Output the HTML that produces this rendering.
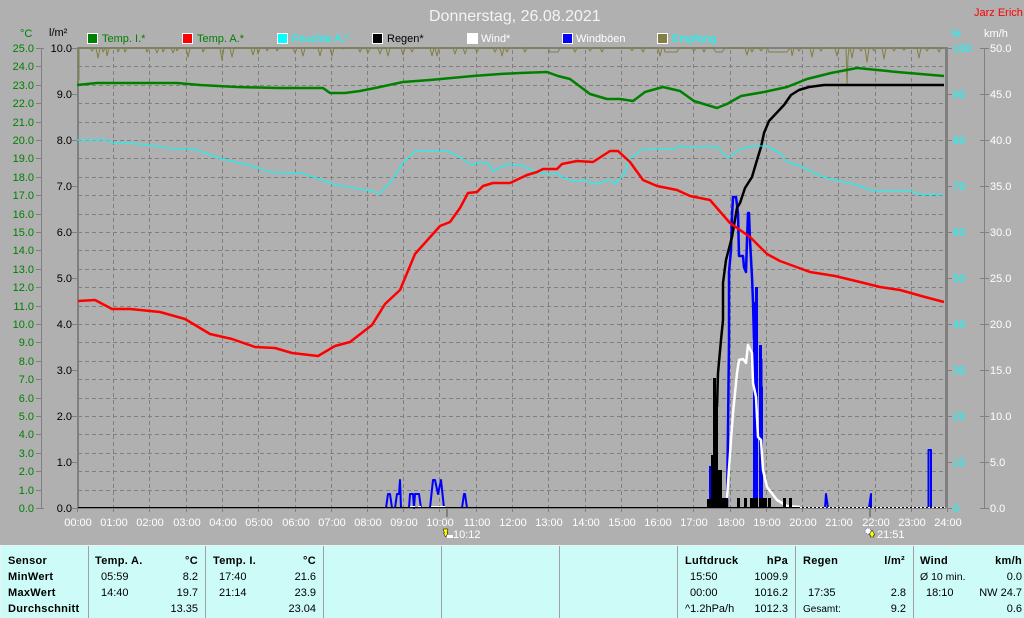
<!DOCTYPE html>
<html><head><meta charset="utf-8"><title>Donnerstag, 26.08.2021</title>
<style>
html,body{margin:0;padding:0;background:#b0b0b0;width:1024px;height:618px;overflow:hidden}
svg{display:block;font-family:"Liberation Sans",sans-serif;font-size:11px}
.l{stroke-linejoin:round;fill:none}
.b{font-weight:bold;fill:#000;letter-spacing:.3px}
.e{text-anchor:end}
.m{text-anchor:middle}
</style></head><body>
<svg width="1024" height="618" viewBox="0 0 1024 618" xmlns="http://www.w3.org/2000/svg">
<rect width="1024" height="618" fill="#b0b0b0"/>

<text x="429" y="21" font-size="16" fill="#f4f4f4">Donnerstag, 26.08.2021</text>
<text x="974" y="16" fill="#f00">Jarz Erich</text>

<g shape-rendering="crispEdges" stroke="#fff">
<rect x="87.5" y="33.5" width="10" height="10" fill="#008000"/>
<rect x="182.5" y="33.5" width="10" height="10" fill="#f00"/>
<rect x="277.5" y="33.5" width="10" height="10" fill="#0ff"/>
<rect x="372.5" y="33.5" width="10" height="10" fill="#000"/>
<rect x="467.5" y="33.5" width="10" height="10" fill="#fff"/>
<rect x="562.5" y="33.5" width="10" height="10" fill="#00f"/>
<rect x="657.5" y="33.5" width="10" height="10" fill="#808040"/>
</g>
<text x="102" y="42" fill="#008000">Temp. I.*</text>
<text x="197" y="42" fill="#008000">Temp. A.*</text>
<text x="292" y="42" fill="#0ff">Feuchte A.*</text>
<text x="387" y="42" fill="#000">Regen*</text>
<text x="481" y="42" fill="#fff">Wind*</text>
<text x="576" y="42" fill="#fff">Windböen</text>
<text x="672" y="42" fill="#0ff">Empfang</text>

<text x="20" y="37" fill="#008000">°C</text>
<text x="49" y="36" fill="#000">l/m²</text>
<text x="951" y="37" fill="#0ff">%</text>
<text x="984" y="37" fill="#fff">km/h</text>

<!-- grid -->
<path shape-rendering="crispEdges" fill="none" stroke="#808080" stroke-dasharray="4 3" d="M78 66.5H945M78 85.5H945M78 103.5H945M78 122.5H945M78 140.5H945M78 158.5H945M78 177.5H945M78 195.5H945M78 214.5H945M78 232.5H945M78 250.5H945M78 269.5H945M78 287.5H945M78 306.5H945M78 324.5H945M78 342.5H945M78 361.5H945M78 379.5H945M78 398.5H945M78 416.5H945M78 434.5H945M78 453.5H945M78 471.5H945M78 490.5H945"/>
<path shape-rendering="crispEdges" fill="none" stroke="#808080" stroke-dasharray="4 3" d="M113.5 50V508M149.5 50V508M186.5 50V508M222.5 50V508M258.5 50V508M295.5 50V508M331.5 50V508M367.5 50V508M403.5 50V508M439.5 50V508M476.5 50V508M512.5 50V508M548.5 50V508M585.5 50V508M621.5 50V508M657.5 50V508M693.5 50V508M730.5 50V508M766.5 50V508M802.5 50V508M838.5 50V508M875.5 50V508M911.5 50V508"/>

<!-- axes -->
<g shape-rendering="crispEdges" fill="#808080">
<rect x="77" y="47" width="869" height="2"/>
<rect x="77" y="47" width="2" height="461"/>
<rect x="945" y="47" width="3" height="461"/>
<rect x="78" y="508" width="868" height="1"/>
<rect x="41" y="48" width="1" height="460"/>
<rect x="984" y="48" width="1" height="460"/>
</g>
<path shape-rendering="crispEdges" fill="none" stroke="#808080" d="M36 48.5H44M36 66.5H41M36 85.5H41M36 103.5H41M36 122.5H41M36 140.5H41M36 158.5H41M36 177.5H41M36 195.5H41M36 214.5H41M36 232.5H41M36 250.5H41M36 269.5H41M36 287.5H41M36 306.5H41M36 324.5H41M36 342.5H41M36 361.5H41M36 379.5H41M36 398.5H41M36 416.5H41M36 434.5H41M36 453.5H41M36 471.5H41M36 490.5H41M36 508.5H44
M72 48.5H77M72 94.5H77M72 140.5H77M72 186.5H77M72 232.5H77M72 278.5H77M72 324.5H77M72 370.5H77M72 416.5H77M72 462.5H77M72 508.5H77
M948 48.5H952M948 94.5H952M948 140.5H952M948 186.5H952M948 232.5H952M948 278.5H952M948 324.5H952M948 370.5H952M948 416.5H952M948 462.5H952M948 508.5H952
M980 48.5H989M980 94.5H989M980 140.5H989M980 186.5H989M980 232.5H989M980 278.5H989M980 324.5H989M980 370.5H989M980 416.5H989M980 462.5H989M980 508.5H989
M77.5 508V512M113.5 508V512M149.5 508V512M186.5 508V512M222.5 508V512M258.5 508V512M295.5 508V512M331.5 508V512M367.5 508V512M403.5 508V512M439.5 508V512M476.5 508V512M512.5 508V512M548.5 508V512M585.5 508V512M621.5 508V512M657.5 508V512M693.5 508V512M730.5 508V512M766.5 508V512M802.5 508V512M838.5 508V512M875.5 508V512M911.5 508V512M947.5 508V512"/>
<rect x="446" y="509" width="2" height="8" fill="#808080"/>
<rect x="869" y="509" width="2" height="8" fill="#808080"/>

<!-- left axis C -->
<g class="e" fill="#008000">
<text x="34" y="52">25.0</text><text x="34" y="70">24.0</text><text x="34" y="89">23.0</text><text x="34" y="107">22.0</text><text x="34" y="126">21.0</text><text x="34" y="144">20.0</text><text x="34" y="162">19.0</text><text x="34" y="181">18.0</text><text x="34" y="199">17.0</text><text x="34" y="218">16.0</text><text x="34" y="236">15.0</text><text x="34" y="254">14.0</text><text x="34" y="273">13.0</text><text x="34" y="291">12.0</text><text x="34" y="310">11.0</text><text x="34" y="328">10.0</text><text x="34" y="346">9.0</text><text x="34" y="365">8.0</text><text x="34" y="383">7.0</text><text x="34" y="402">6.0</text><text x="34" y="420">5.0</text><text x="34" y="438">4.0</text><text x="34" y="457">3.0</text><text x="34" y="475">2.0</text><text x="34" y="494">1.0</text><text x="34" y="512">0.0</text>
</g>
<g class="e" fill="#000">
<text x="72" y="52">10.0</text><text x="72" y="98">9.0</text><text x="72" y="144">8.0</text><text x="72" y="190">7.0</text><text x="72" y="236">6.0</text><text x="72" y="282">5.0</text><text x="72" y="328">4.0</text><text x="72" y="374">3.0</text><text x="72" y="420">2.0</text><text x="72" y="466">1.0</text><text x="72" y="512">0.0</text>
</g>
<g fill="#0ff">
<text x="953" y="52">100</text><text x="953" y="98">90</text><text x="953" y="144">80</text><text x="953" y="190">70</text><text x="953" y="236">60</text><text x="953" y="282">50</text><text x="953" y="328">40</text><text x="953" y="374">30</text><text x="953" y="420">20</text><text x="953" y="466">10</text><text x="953" y="512">0</text>
</g>
<g fill="#fff">
<text x="990" y="52">50.0</text><text x="990" y="98">45.0</text><text x="990" y="144">40.0</text><text x="990" y="190">35.0</text><text x="990" y="236">30.0</text><text x="990" y="282">25.0</text><text x="990" y="328">20.0</text><text x="990" y="374">15.0</text><text x="990" y="420">10.0</text><text x="990" y="466">5.0</text><text x="990" y="512">0.0</text>
</g>
<g class="m" fill="#fff">
<text x="78" y="526">00:00</text><text x="114" y="526">01:00</text><text x="150" y="526">02:00</text><text x="187" y="526">03:00</text><text x="223" y="526">04:00</text><text x="259" y="526">05:00</text><text x="296" y="526">06:00</text><text x="332" y="526">07:00</text><text x="368" y="526">08:00</text><text x="404" y="526">09:00</text><text x="440" y="526">10:00</text><text x="477" y="526">11:00</text><text x="513" y="526">12:00</text><text x="549" y="526">13:00</text><text x="586" y="526">14:00</text><text x="622" y="526">15:00</text><text x="658" y="526">16:00</text><text x="694" y="526">17:00</text><text x="731" y="526">18:00</text><text x="767" y="526">19:00</text><text x="803" y="526">20:00</text><text x="839" y="526">21:00</text><text x="876" y="526">22:00</text><text x="912" y="526">23:00</text><text x="948" y="526">24:00</text>
</g>
<text x="453" y="538" fill="#fff">10:12</text>
<text x="877" y="538" fill="#fff">21:51</text>

<!-- sunrise icon -->
<path d="M443 529h5l-1 4h1l-2.500 4l-2-4h1z" fill="#ff0" stroke="#000" stroke-width=".5"/>
<rect x="447" y="535" width="6" height="3" fill="#fff"/>
<!-- sunset icon -->
<circle cx="868" cy="531" r="3" fill="#fff" stroke="#5050c0" stroke-width=".8" stroke-dasharray="1 1"/>
<path d="M872 530l3 5h-1.500v2h-3v-2h-1.500z" fill="#ff0" stroke="#000" stroke-width=".5"/>

<!-- Empfang -->
<polyline class="l" transform="translate(0,-1)" stroke="#808040" stroke-width="1" points="78,85 79,80 79,49 90,49 92,52 94,49 96,49 98,59 100,49 102,49 103,53 105,49 106,49 107,57 109,49 117,49 118,53 120,49 124,49 125,53 127,49 146,49 147,53 149,49 155,49 157,54 159,49 162,49 163,53 165,49 171,49 173,54 175,49 176,49 177,52 179,49 186,49 188,58 190,49 202,49 203,53 205,49 220,49 222,61 224,49 230,49 232,58 234,49 251,49 253,56 255,49 257,49 258,55 260,49 266,49 267,52 269,49 276,49 277,52 279,49 293,49 295,54 297,49 301,49 303,57 305,49 318,49 320,57 322,49 330,49 332,57 334,49 342,49 343,50 345,49 358,49 360,53 362,49 366,49 368,54 370,49 378,49 380,55 382,49 386,49 388,57 390,49 401,49 403,56 405,49 410,49 412,53 414,49 430,49 432,57 434,49 435,49 437,57 439,49 453,49 455,55 457,49 463,49 465,55 467,49 475,49 477,53 479,49 493,49 495,53 497,49 500,49 502,57 504,49 505,49 507,53 509,49 523,49 525,53 527,49 548,49 550,53 558,53 560,49 573,49 575,53 577,49 588,49 590,52 592,49 600,49 602,53 604,49 630,49 632,52 634,49 641,49 643,53 645,49 658,49 660,57 662,49 664,49 665,53 677,53 679,49 692,49 694,52 696,49 702,49 704,53 706,49 713,49 716,53 722,53 725,49 745,49 747,56 749,49 750,49 752,53 754,49 759,49 761,52 763,49 767,49 769,53 787,53 790,49 791,49 792,57 794,49 797,49 799,52 801,49 810,49 812,58 814,49 819,49 821,52 823,49 835,49 837,57 839,49 846,49 847,86 848,58 849,49 850,49 852,59 854,49 859,49 861,52 863,49 865,49 867,63 869,49 872,49 874,52 876,49 882,49 884,60 886,49 892,49 894,52 896,49 902,49 904,51 906,49 917,49 919,59 921,49 925,49 927,52 929,49 937,49 939,53 941,49 944,49"/>

<!-- rain bars -->
<path shape-rendering="crispEdges" fill="#00f" d="M709 508V466H712V508Z"/>
<!-- Windboeen -->
<g class="l" stroke="#00f" stroke-width="2">
<polyline points="386,508 388,494 390,494 392,508"/>
<polyline points="395,508 397,494 399,494 400,480 401,508"/>
<polyline points="409,508 410,494 413,494 414,508 415,494 419,494 421,508"/>
<polyline points="430,508 433,480 435,480 438,494 441,480 444,508"/>
<polyline points="462,508 464,494 465,494 467,508"/>
<polyline points="825,508 826,494 828,508"/>
<polyline points="869,508 871,494 871,508"/>
<polyline points="928.500,508 928.500,450 931,450 931,508"/>
<polyline stroke-width="2.500" points="727,508 728,430 729,340 729,272 731,250 732,217 733,197 736,197 738,213 739,256 743,256 744,267 746,272 747,240 748,213 749,213 750,240 752,277 753,302 754,340"/>
</g>
<path shape-rendering="crispEdges" fill="#00f" d="M753 302H755V287H758V508H753ZM759 345H762L763 400V508H759Z"/>

<!-- Wind -->
<polyline class="l" stroke="#fff" stroke-width="2.500" points="726,505 727,498 728,483 731,440 733,413 737,373 739,360 743,359 746,363 748,345 752,353 753,383 756,397 758,437 761,440 763,470 767,487 777,500 787,506 800,507"/>
<path shape-rendering="crispEdges" fill="#fff" d="M410 506h5v1h-5zM418 506h3v1h-3zM431 506h14v1h-14z"/>

<!-- rain bars black -->
<path shape-rendering="crispEdges" fill="#000" d="M707 508V499H711V455H713V378H716V407H718V470H722V498H728V508ZM737 508V498H740V508ZM744 508V498H747V508ZM750 508V498H758V508ZM759 508V498H767V508ZM768 508V498H771V508ZM783 508V498H786V508ZM789 508V498H792V508Z"/>
<rect x="78" y="507" width="722" height="1" fill="#000" shape-rendering="crispEdges"/>
<path shape-rendering="crispEdges" stroke="#000" fill="none" d="M800 507.500H945"/>
<path shape-rendering="crispEdges" stroke="#fff" stroke-dasharray="2 2" fill="none" d="M800 507.500H945"/>

<!-- Regen sum -->
<polyline class="l" stroke="#000" stroke-width="2.500" points="717,407 718,373 721,340 723,320 723,283 726,260 732,237 737,208 740,203 745,188 752,177 757,160 761,147 764,133 769,121 784,105 791,95 799,90 809,87 824,85 944,85"/>

<!-- Feuchte -->
<polyline class="l" stroke="#0ff" stroke-width="1" points="77,140 108,140 112,143 140,144 157,146 167,148 198,150 205,153 222,159 245,164 270,172 300,173 320,179 335,185 355,188 380,193 390,183 403,163 415,151 427,151 447,151 460,157 472,165 480,162 488,163 493,171 508,164 520,165 537,172 547,174 557,173 563,178 573,181 587,180 590,183 598,184 607,180 611,180 615,184 625,173 628,160 643,149 673,149 680,146 693,148 710,146 718,147 725,156 730,157 740,149 753,146 767,146 780,153 787,162 800,166 823,177 857,185 873,191 910,191 923,195 932,194 943,195"/>

<!-- Temp I -->
<polyline class="l" stroke="#008000" stroke-width="2.500" points="77,85 97,83 177,83 200,85 237,87 278,88 323,88 330,93 345,93 360,91 380,87 403,82 430,80 473,76 500,74 520,73 547,72 558,76 570,79 590,94 607,99 620,99 633,101 645,92 663,87 680,91 694,101 717,108 727,104 741,96 764,92 787,87 807,79 831,73 857,68 897,72 944,76"/>

<!-- Temp A -->
<polyline class="l" stroke="#f00" stroke-width="2.500" points="78,301 95,300 112,309 130,309 160,312 185,319 210,334 232,339 255,347 275,348 292,353 318,356 335,346 350,342 372,325 385,304 400,290 415,254 440,226 450,222 460,208 468,193 477,192 483,186 493,183 510,183 527,175 537,172 543,169 557,169 562,164 577,161 593,162 607,153 610,151 618,151 630,162 643,180 657,186 677,190 690,196 710,200 723,215 730,223 750,237 767,254 780,261 810,272 835,276 860,282 880,287 900,290 925,297 944,302"/>

<!-- table -->
<rect x="0" y="545" width="1024" height="73" fill="#e8f4f4" shape-rendering="crispEdges"/>
<rect x="1" y="546" width="1023" height="72" fill="#ccfbf8" shape-rendering="crispEdges"/>
<path shape-rendering="crispEdges" stroke="#a0a0a0" fill="none" d="M88.500 546V618M205.500 546V618M323.500 546V618M441.500 546V618M559.500 546V618M677.500 546V618M795.500 546V618M913.500 546V618"/>

<g fill="#000">
<text class="b" x="8" y="564">Sensor</text>
<text class="b" x="8" y="580">MinWert</text>
<text class="b" x="8" y="596">MaxWert</text>
<text class="b" x="8" y="612">Durchschnitt</text>

<text class="b" x="95" y="564">Temp. A.</text><text class="b e" x="198" y="564">°C</text>
<text x="101" y="580">05:59</text><text class="e" x="198" y="580">8.2</text>
<text x="101" y="596">14:40</text><text class="e" x="198" y="596">19.7</text>
<text class="e" x="198" y="612">13.35</text>

<text class="b" x="213" y="564">Temp. I.</text><text class="b e" x="316" y="564">°C</text>
<text x="219" y="580">17:40</text><text class="e" x="316" y="580">21.6</text>
<text x="219" y="596">21:14</text><text class="e" x="316" y="596">23.9</text>
<text class="e" x="316" y="612">23.04</text>

<text class="b" x="685" y="564">Luftdruck</text><text class="b e" x="788" y="564">hPa</text>
<text x="690" y="580">15:50</text><text class="e" x="788" y="580">1009.9</text>
<text x="690" y="596">00:00</text><text class="e" x="788" y="596">1016.2</text>
<text x="685" y="612">^1.2hPa/h</text><text class="e" x="788" y="612">1012.3</text>

<text class="b" x="803" y="564">Regen</text><text class="b e" x="905" y="564">l/m²</text>
<text x="808" y="596">17:35</text><text class="e" x="906" y="596">2.8</text>
<text x="803" y="612" font-size="10">Gesamt:</text><text class="e" x="906" y="612">9.2</text>

<text class="b" x="920" y="564">Wind</text><text class="b e" x="1022" y="564">km/h</text>
<text x="920" y="580" font-size="10.500">Ø 10 min.</text><text class="e" x="1022" y="580">0.0</text>
<text x="926" y="596">18:10</text><text class="e" x="1022" y="596">NW 24.7</text>
<text class="e" x="1022" y="612">0.6</text>
</g>
</svg>
</body></html>
